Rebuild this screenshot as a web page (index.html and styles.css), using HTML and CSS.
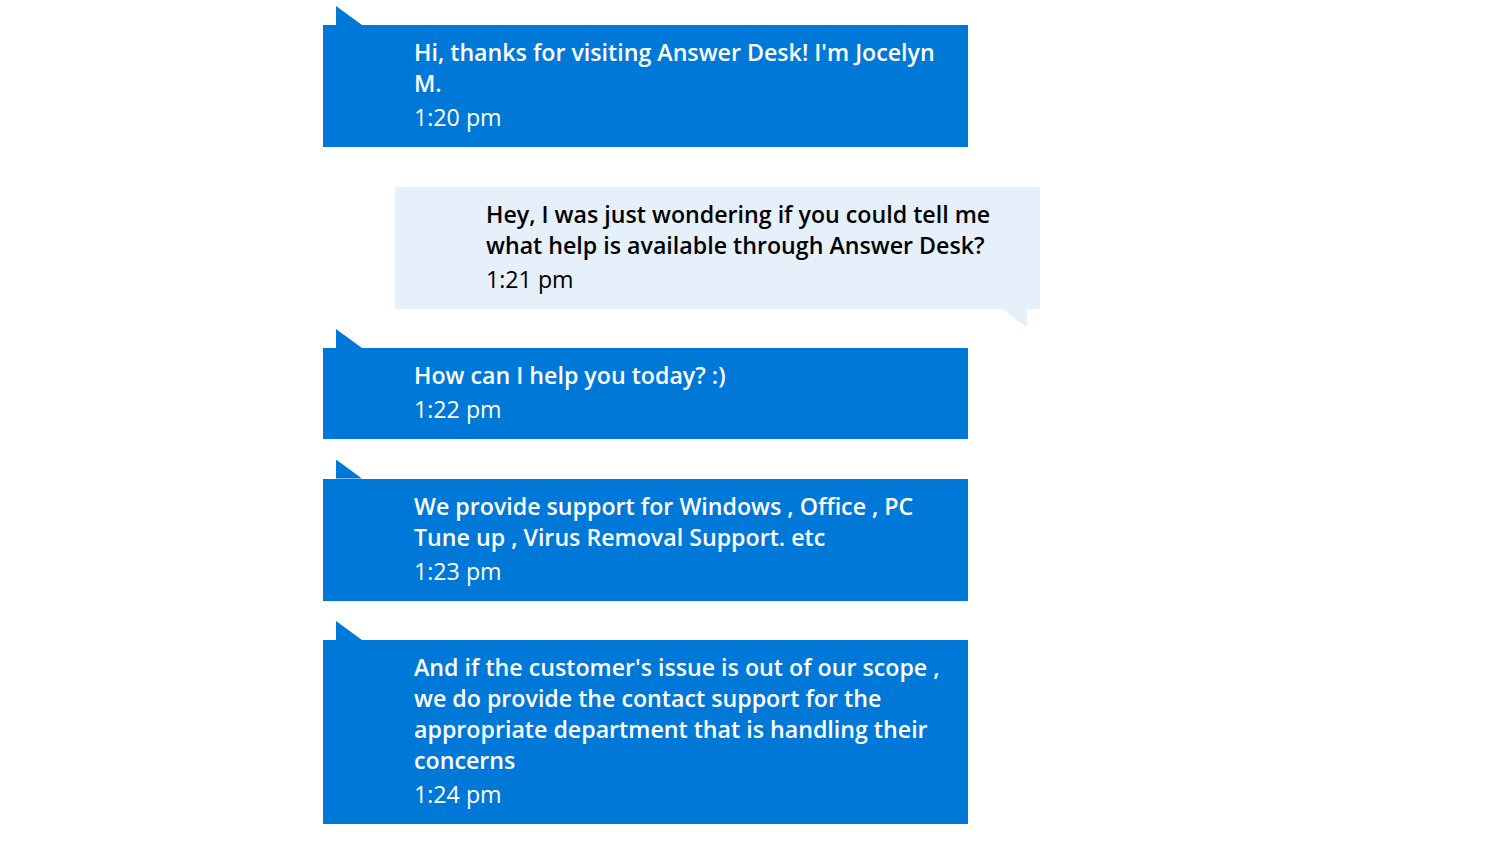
FILE: index.html
```html
<!DOCTYPE html>
<html lang="en">
<head>
<meta charset="utf-8">
<title>Answer Desk chat</title>
<link rel="stylesheet" href="styles.css">
</head>
<body>
<div class="chat">
  <div class="msg msg-agent">
    <div class="msg-text">Hi, thanks for visiting Answer Desk! I'm Jocelyn M.</div>
    <div class="msg-time">1:20 pm</div>
  </div>
  <div class="msg msg-user">
    <div class="msg-text">Hey, I was just wondering if you could tell me what help is available through Answer Desk?</div>
    <div class="msg-time">1:21 pm</div>
  </div>
  <div class="msg msg-agent">
    <div class="msg-text">How can I help you today? :)</div>
    <div class="msg-time">1:22 pm</div>
  </div>
  <div class="msg msg-agent">
    <div class="msg-text">We provide support for Windows , Office , PC Tune up , Virus Removal Support. etc</div>
    <div class="msg-time">1:23 pm</div>
  </div>
  <div class="msg msg-agent">
    <div class="msg-text">And if the customer's issue is out of our scope , we do provide the contact support for the appropriate department that is handling their concerns</div>
    <div class="msg-time">1:24 pm</div>
  </div>
</div>
</body>
</html>
```
FILE: styles.css
```css
html, body {
  margin: 0;
  padding: 0;
  background: #ffffff;
}
body {
  font-family: "Open Sans", "Noto Sans", sans-serif;
}
.chat {
  width: 717px;
  margin-left: 323px;
  padding-top: 25px;
  display: flex;
  flex-direction: column;
  gap: 39.5px;
}
.msg {
  position: relative;
  width: 645px;
  box-sizing: border-box;
  padding: 12px 13px 14px 91px;
  font-size: 23.2px;
  line-height: 31px;
}
.msg-text {
  font-weight: 600;
}
.msg-time {
  font-weight: 400;
  margin-top: 3px;
}
.msg-agent {
  align-self: flex-start;
  background: #0078d7;
  color: #ffffff;
}
.msg-agent::before {
  content: "";
  position: absolute;
  left: 13px;
  top: -19px;
  width: 26px;
  height: 19px;
  background: #0078d7;
  clip-path: polygon(0 0, 0 100%, 100% 100%);
}
.msg-user {
  align-self: flex-end;
  background: #e6f0fa;
  color: #000000;
}
.msg-user::after {
  content: "";
  position: absolute;
  right: 13px;
  bottom: -19px;
  width: 26px;
  height: 19px;
  background: #e6f0fa;
  clip-path: polygon(0 0, 100% 0, 100% 100%);
}
```
